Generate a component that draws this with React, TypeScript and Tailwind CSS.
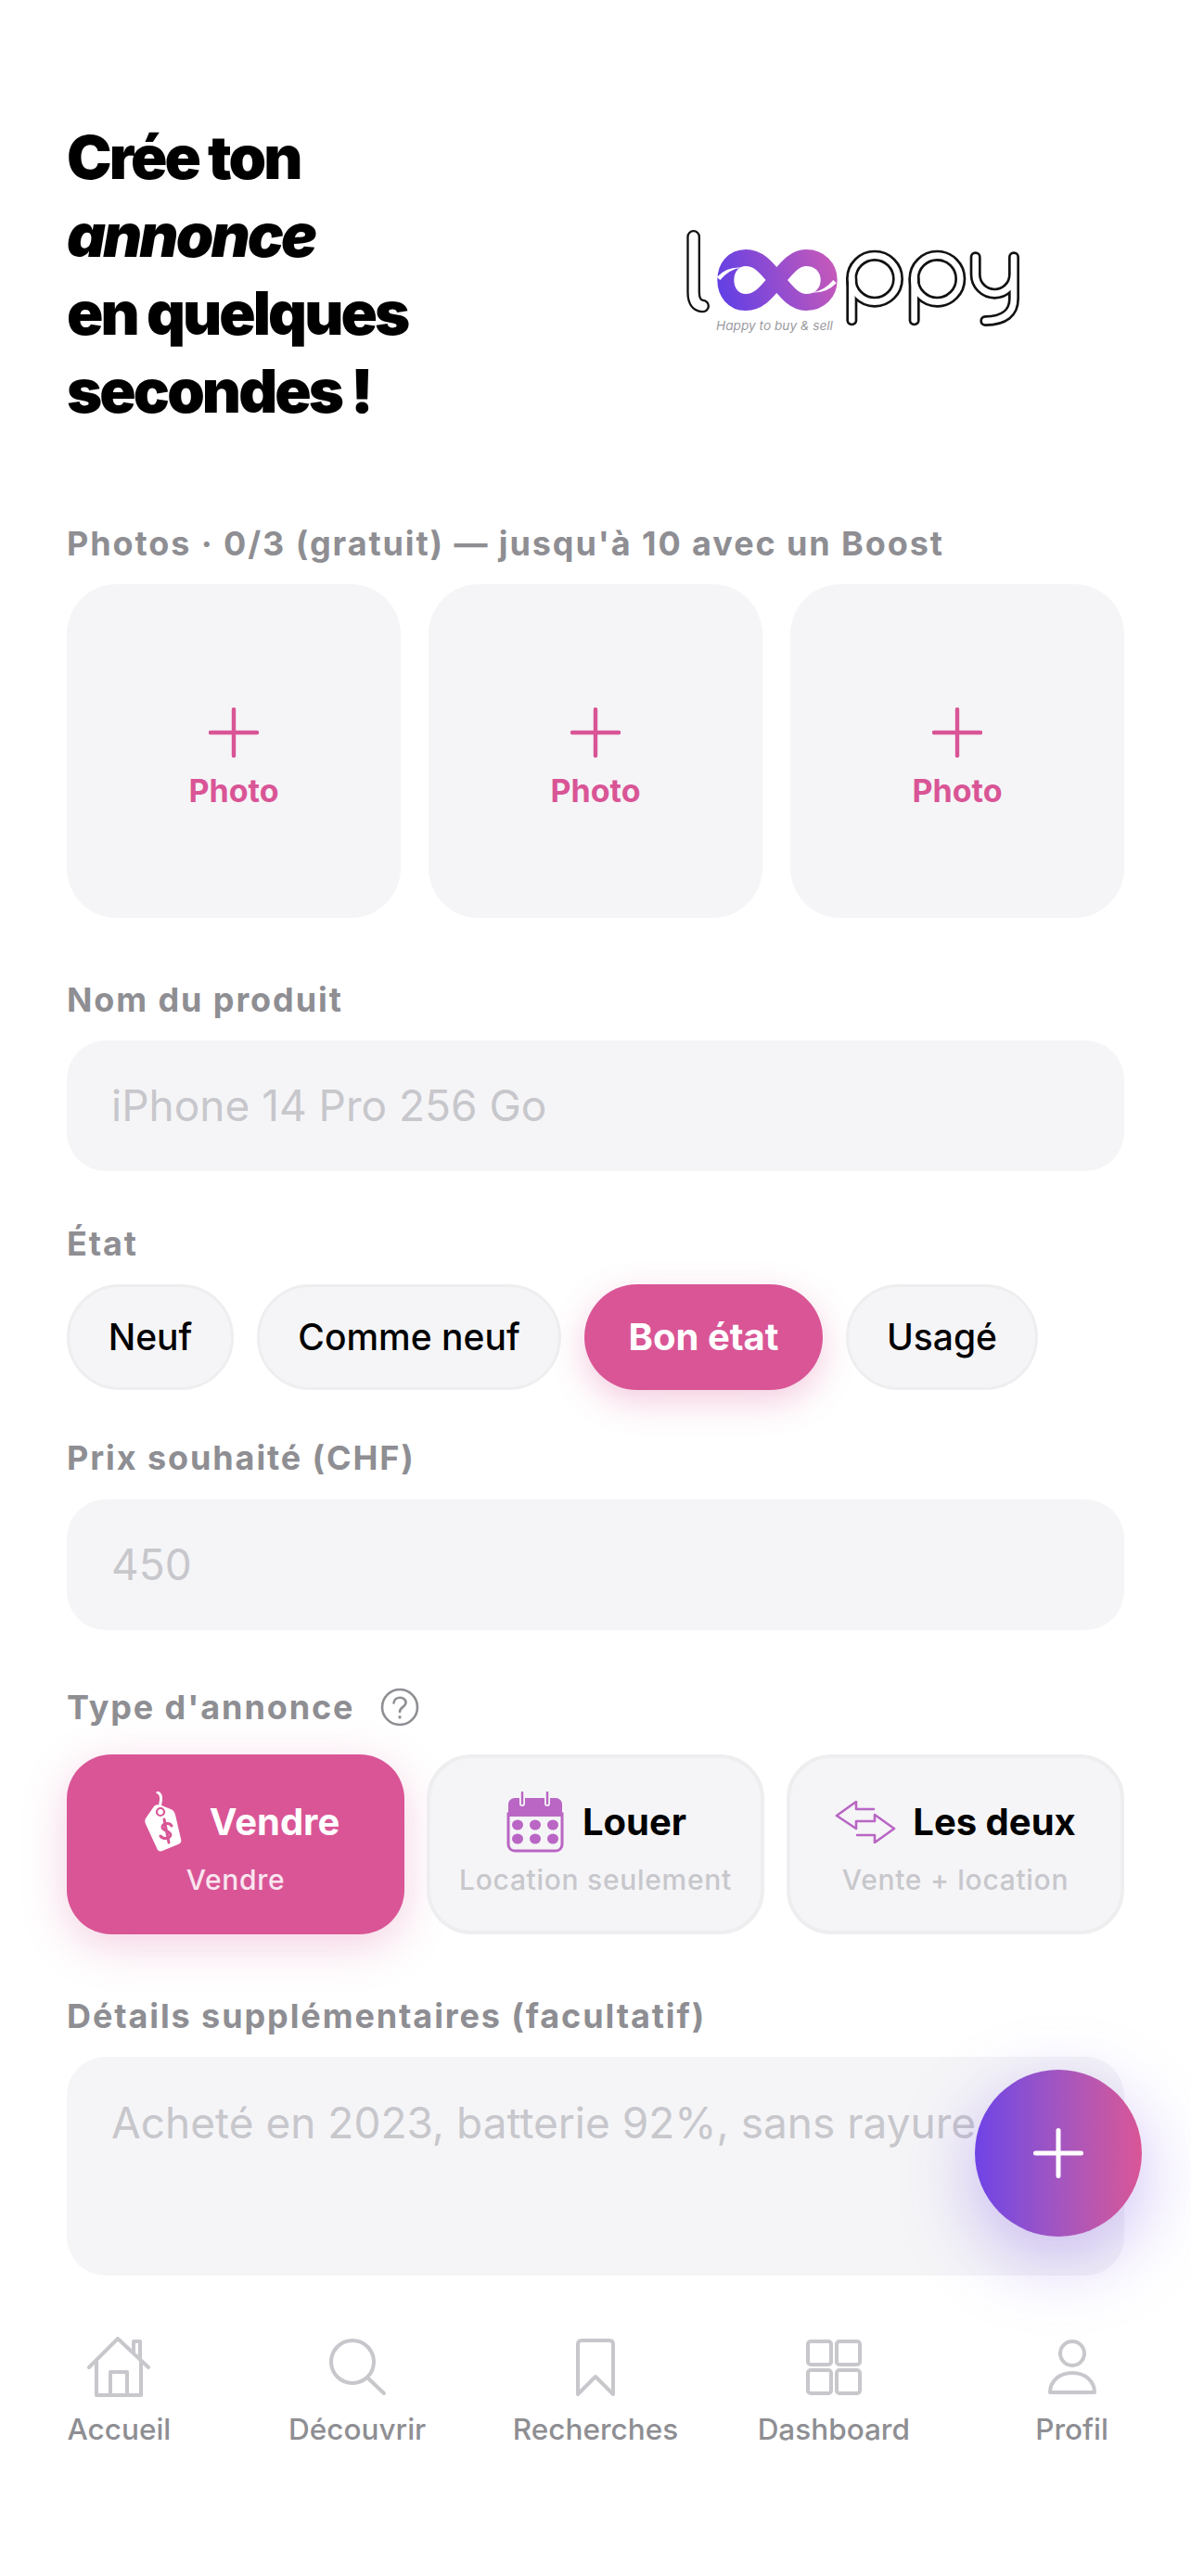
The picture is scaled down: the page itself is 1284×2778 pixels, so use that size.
import React from "react";

const Logo = () => (
  <svg viewBox="0 0 1260 450" className="w-[420px] h-[150px] shrink-0">
    <defs>
      <linearGradient id="inf" gradientUnits="userSpaceOnUse" x1="225" y1="300" x2="610" y2="180">
        <stop offset="0" stopColor="#5f3fe6" />
        <stop offset="1" stopColor="#c85ab8" />
      </linearGradient>
    </defs>
    <g fill="none" strokeLinecap="round" strokeLinejoin="round" stroke="#111">
      <g strokeWidth="44">
        <path d="M146 100V280Q146 322 176 324" />
      </g>
      <g strokeWidth="36">
        <circle cx="732" cy="236" r="75" />
        <path d="M658 236V370" />
        <circle cx="934" cy="236" r="75" />
        <path d="M860 236V370" />
        <path d="M1058 166V222A62 62 0 0 0 1182 222V166M1182 222V300Q1182 370 1090 372" />
      </g>
      <g stroke="#fff">
        <path strokeWidth="30" d="M146 100V280Q146 322 176 324" />
        <g strokeWidth="20">
          <circle cx="732" cy="236" r="75" />
          <path d="M658 236V370" />
          <circle cx="934" cy="236" r="75" />
          <path d="M860 236V370" />
          <path d="M1058 166V222A62 62 0 0 0 1182 222V166M1182 222V300Q1182 370 1090 372" />
        </g>
      </g>
    </g>
    <path
      d="M315 168C360 168 385 205 415 240C445 275 470 312 510 312C555 312 584 280 584 240C584 200 555 168 510 168C470 168 445 205 415 240C385 275 360 312 315 312C275 312 250 280 250 240C250 200 275 168 315 168Z"
      fill="none"
      stroke="url(#inf)"
      strokeWidth="54"
    />
    <path d="M222 230Q255 196 300 200Q262 204 232 240Z" fill="#fff" />
    <path d="M608 250Q575 284 530 280Q568 276 598 240Z" fill="#fff" />
    <text x="408" y="403" textAnchor="middle" fontFamily="Inter, sans-serif" fontStyle="italic" fontSize="41" fill="#9a9a9f">
      Happy to buy &amp; sell
    </text>
  </svg>
);

const Label = ({ children, className = "" }: { children: React.ReactNode; className?: string }) => (
  <div className={"text-[36px] leading-[44px] font-bold tracking-[1.9px] text-[#8e8e93] " + className}>{children}</div>
);

const PhotoTile = () => (
  <div className="w-[360px] h-[360px] rounded-[54px] bg-[#f5f5f7] flex flex-col items-center justify-center pt-[18px]">
    <svg viewBox="0 0 54 54" className="w-[54px] h-[54px] mt-[-2px]" fill="none" stroke="#d95596" strokeWidth="4.4" strokeLinecap="round">
      <path d="M27 2V52M2 27H52" />
    </svg>
    <div className="mt-[16px] text-[34px] leading-[40px] font-bold text-[#d95596]">Photo</div>
  </div>
);

const Field = ({ text, className = "" }: { text: string; className?: string }) => (
  <div className={"h-[141px] rounded-[42px] bg-[#f5f5f7] pl-[48px] flex items-center text-[46px] text-[#c7c7cc] " + className}>{text}</div>
);

const Pill = ({ text, w, active }: { text: string; w: string; active?: boolean }) => (
  <div
    className={
      "h-[114px] rounded-full flex items-center justify-center " +
      w +
      (active
        ? " text-[40px] bg-[#d95596] text-white font-bold shadow-[0_12px_36px_rgba(217,85,150,0.3)]"
        : " text-[39px] bg-[#f5f5f7] text-black font-medium border-[3px] border-[#eeeef0]")
    }
  >
    {text}
  </div>
);

const TagIcon = () => (
  <svg viewBox="0 0 66 66" className="w-[66px] h-[66px] ml-[-4px]">
    <path d="M30 1C34 3 34 8 33 12C32 16 33 18 34 22" fill="none" stroke="#fff" strokeWidth="3" strokeLinecap="round" />
    <path d="M17 29L26 16C28 14 31 14 34 15L44 19C47 20 48 22 49 25L55 51C56 54 55 56 52 57L35 64C32 65 30 64 29 61L17 35C16 33 16 31 17 29Z" fill="#fff" />
    <circle cx="33" cy="22" r="4" fill="none" stroke="#d95596" strokeWidth="2.2" />
    <path d="M45 37C43 33 36 34 35 38C34 42 44 42 44 47C43 51 36 52 33 48M37 30L42 55" fill="none" stroke="#d95596" strokeWidth="3" strokeLinecap="round" />
  </svg>
);

const CalendarIcon = () => (
  <svg viewBox="0 0 66 66" className="w-[66px] h-[66px]">
    <path d="M4 27V14C4 10 7 7 11 7H55C59 7 62 10 62 14V27Z" fill="#b966c4" />
    <path d="M4 24H62V57C62 61 59 64 55 64H11C7 64 4 61 4 57Z" fill="none" stroke="#b966c4" strokeWidth="3" />
    <path d="M19 1V13M46 1V13" stroke="#f5f5f7" strokeWidth="6" strokeLinecap="round" />
    <path d="M19 1V13M46 1V13" stroke="#b966c4" strokeWidth="2.4" strokeLinecap="round" />
    {[14, 33, 52].map((x) =>
      [36, 51].map((y) => <ellipse key={x + "-" + y} cx={x} cy={y} rx="6" ry="5.5" fill="#b966c4" />)
    )}
  </svg>
);

const ArrowsIcon = () => (
  <svg viewBox="0 0 66 46" className="w-[66px] h-[46px]" fill="none" stroke="#b966c4" strokeWidth="2.6" strokeLinecap="round" strokeLinejoin="round">
    <path d="M42 9H23V1L2 16L23 30V22H43V15L64 30L43 45V37H24" />
  </svg>
);

const TypeCard = ({ icon, title, sub, active }: { icon: React.ReactNode; title: string; sub: string; active?: boolean }) => (
  <div
    className={
      "w-[364px] h-[194px] rounded-[48px] flex flex-col items-center " +
      (active
        ? "bg-[#d95596] pt-[40px] shadow-[0_12px_48px_rgba(217,85,150,0.28)]"
        : "bg-[#f5f5f7] pt-[36px] border-[4px] border-[#eeeef0]")
    }
  >
    <div className="h-[66px] flex items-center gap-[18px]">
      <div className="w-[66px] h-[66px] flex items-center justify-center">{icon}</div>
      <span className={"text-[40px] leading-[48px] font-bold " + (active ? "text-white" : "text-black")}>{title}</span>
    </div>
    <div className={"mt-[11px] text-[30px] leading-[36px] tracking-[0.7px] font-medium " + (active ? "text-white/85" : "text-[#c7c7cc]")}>{sub}</div>
  </div>
);

const navCls = "w-[68px] h-[66px]";
const navProps = { fill: "none", stroke: "#c7c7cc", strokeWidth: 4, strokeLinecap: "round" as const, strokeLinejoin: "round" as const };

const tabs = [
  {
    label: "Accueil",
    icon: (
      <svg viewBox="0 0 68 66" className={navCls} {...navProps}>
        <path d="M2 33L33 2L66 33M50 17V5H57V24M10 26V63H58V26M25 63V38H43V63" />
      </svg>
    ),
  },
  {
    label: "Découvrir",
    icon: (
      <svg viewBox="0 0 68 66" className={navCls} {...navProps}>
        <circle cx="29" cy="27" r="23" />
        <path d="M45 44L63 61" />
      </svg>
    ),
  },
  {
    label: "Recherches",
    icon: (
      <svg viewBox="0 0 68 66" className={navCls} {...navProps}>
        <path d="M15 8C15 5 17 4 19 4H49C51 4 53 5 53 8V62L34 43L15 62Z" />
      </svg>
    ),
  },
  {
    label: "Dashboard",
    icon: (
      <svg viewBox="0 0 68 66" className={navCls} {...navProps}>
        <rect x="6" y="5" width="25" height="25" rx="3" />
        <rect x="37" y="5" width="25" height="25" rx="3" />
        <rect x="6" y="36" width="25" height="25" rx="3" />
        <rect x="37" y="36" width="25" height="25" rx="3" />
      </svg>
    ),
  },
  {
    label: "Profil",
    icon: (
      <svg viewBox="0 0 68 66" className={navCls} {...navProps}>
        <circle cx="34" cy="18" r="13" />
        <path d="M10 60C10 48 20 39 34 39C48 39 58 48 58 60Z" />
      </svg>
    ),
  },
];

export default function App() {
  return (
    <div className="relative w-[1284px] h-[2778px] bg-white overflow-hidden font-['Inter','Noto_Sans',sans-serif]">
      <div className="px-[72px] pt-[128px]">
        <div className="flex items-center justify-between h-[336px]">
          <h1 className="text-[65px] leading-[84px] font-black tracking-[-2.9px] text-black">
            Crée ton
            <br />
            <em>annonce</em>
            <br />
            en quelques
            <br />
            secondes !
          </h1>
          <div className="mr-[93px] mt-[2px]">
            <Logo />
          </div>
        </div>

        <Label className="mt-[100px]">Photos · 0/3 (gratuit) — jusqu'à 10 avec un Boost</Label>
        <div className="mt-[22px] flex gap-[30px]">
          <PhotoTile />
          <PhotoTile />
          <PhotoTile />
        </div>

        <Label className="mt-[66px]">Nom du produit</Label>
        <Field className="mt-[22px]" text="iPhone 14 Pro 256 Go" />

        <Label className="mt-[56px]">État</Label>
        <div className="mt-[22px] flex gap-[25px]">
          <Pill text="Neuf" w="w-[180px]" />
          <Pill text="Comme neuf" w="w-[328px]" />
          <Pill text="Bon état" w="w-[257px]" active />
          <Pill text="Usagé" w="w-[207px]" />
        </div>

        <Label className="mt-[51px]">Prix souhaité (CHF)</Label>
        <Field className="mt-[23px]" text="450" />

        <div className="mt-[61px] flex items-center gap-[28px]">
          <Label>Type d'annonce</Label>
          <svg viewBox="0 0 42 42" className="w-[42px] h-[42px]" fill="none" stroke="#8e8e93" strokeWidth="2.6" strokeLinecap="round">
            <circle cx="21" cy="21" r="19" />
            <path d="M14.5 16.5C15 8.5 28 9 27.5 16.5C27 21 21 21 21 26" />
            <path d="M21 31.5V32" strokeWidth="3.2" />
          </svg>
        </div>
        <div className="mt-[29px] flex gap-[24px]">
          <TypeCard active icon={<TagIcon />} title="Vendre" sub="Vendre" />
          <TypeCard icon={<CalendarIcon />} title="Louer" sub="Location seulement" />
          <TypeCard icon={<ArrowsIcon />} title="Les deux" sub="Vente + location" />
        </div>

        <Label className="mt-[66px]">Détails supplémentaires (facultatif)</Label>
        <div className="mt-[22px] h-[236px] rounded-[42px] bg-[#f5f5f7] pl-[48px] pt-[42px] text-[46px] leading-[58px] text-[#c7c7cc] whitespace-nowrap overflow-hidden">
          Acheté en 2023, batterie 92%, sans rayure...
        </div>
      </div>

      <div className="mt-[66px] grid grid-cols-5">
        {tabs.map((t) => (
          <div key={t.label} className="flex flex-col items-center">
            {t.icon}
            <div className="mt-[14px] text-[31.5px] leading-[40px] font-medium text-[#8e8e93]">{t.label}</div>
          </div>
        ))}
      </div>

      <div className="absolute left-[1051px] top-[2232px] w-[180px] h-[180px] rounded-full bg-gradient-to-r from-[#6f42e6] to-[#d95596] shadow-[0_24px_80px_rgba(111,66,230,0.35)] flex items-center justify-center">
        <svg viewBox="0 0 54 54" className="w-[54px] h-[54px]" fill="none" stroke="#fff" strokeWidth="5" strokeLinecap="round">
          <path d="M27 2.5V51.5M2.5 27H51.5" />
        </svg>
      </div>
    </div>
  );
}
